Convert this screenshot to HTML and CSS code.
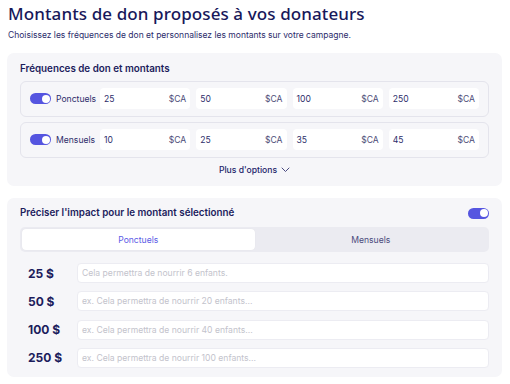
FILE: index.html
```html
<!DOCTYPE html>
<html lang="fr">
<head>
<meta charset="utf-8">
<link rel="stylesheet" href="styles.css">
</head>
<body>
<div class="page">
  <h1 class="title">Montants de don proposés à vos donateurs</h1>
  <p class="subtitle">Choisissez les fréquences de don et personnalisez les montants sur votre campagne.</p>

  <section class="card card-freq">
    <h2 class="card-title">Fréquences de don et montants</h2>
    <div class="freq-row">
      <span class="toggle"><span class="knob"></span></span>
      <span class="freq-label">Ponctuels</span>
      <div class="amounts">
        <div class="amount"><span>25</span><span class="cur">$CA</span></div>
        <div class="amount"><span>50</span><span class="cur">$CA</span></div>
        <div class="amount"><span>100</span><span class="cur">$CA</span></div>
        <div class="amount"><span>250</span><span class="cur">$CA</span></div>
      </div>
    </div>
    <div class="freq-row">
      <span class="toggle"><span class="knob"></span></span>
      <span class="freq-label">Mensuels</span>
      <div class="amounts">
        <div class="amount"><span>10</span><span class="cur">$CA</span></div>
        <div class="amount"><span>25</span><span class="cur">$CA</span></div>
        <div class="amount"><span>35</span><span class="cur">$CA</span></div>
        <div class="amount"><span>45</span><span class="cur">$CA</span></div>
      </div>
    </div>
    <div class="more">Plus d'options
      <svg class="chev" width="9" height="6" viewBox="0 0 9 6"><path d="M1 1 L4.5 4.5 L8 1" fill="none" stroke="currentColor" stroke-width="1" stroke-linecap="round" stroke-linejoin="round"/></svg>
    </div>
  </section>

  <section class="card card-impact">
    <div class="impact-head">
      <h2 class="card-title">Préciser l'impact pour le montant sélectionné</h2>
      <span class="toggle"><span class="knob"></span></span>
    </div>
    <div class="tabs">
      <div class="tab active">Ponctuels</div>
      <div class="tab">Mensuels</div>
    </div>
    <div class="impact-rows">
      <div class="impact-row"><span class="impact-amt">25 $</span><div class="impact-input">Cela permettra de nourrir 6 enfants.</div></div>
      <div class="impact-row"><span class="impact-amt">50 $</span><div class="impact-input">ex. Cela permettra de nourrir 20 enfants...</div></div>
      <div class="impact-row"><span class="impact-amt">100 $</span><div class="impact-input">ex. Cela permettra de nourrir 40 enfants...</div></div>
      <div class="impact-row"><span class="impact-amt">250 $</span><div class="impact-input">ex. Cela permettra de nourrir 100 enfants...</div></div>
    </div>
  </section>
</div>
</body>
</html>
```

FILE: styles.css
```css
* { box-sizing: border-box; }
html, body { margin: 0; padding: 0; background: #ffffff; }
body { font-family: Inter, "Liberation Sans", sans-serif; color: #1c1c5c; }

.page { padding: 3px 8px 0 7px; }

.title {
  margin: 0 0 0 1px;
  font-family: "Noto Sans", "Open Sans", sans-serif;
  font-weight: 500;
  font-size: 17px;
  line-height: 22px;
  color: #18185a;
  letter-spacing: 0.1px;
}

.subtitle {
  margin: 4px 0 0 1px;
  font-size: 8.5px;
  line-height: 13px;
  color: #2b2b6b;
}

.card {
  background: #f6f6f9;
  border-radius: 7px;
  padding: 0 13px;
}

.card-freq {
  margin-top: 11px;
  padding-top: 9px;
  padding-bottom: 9px;
}

.card-title {
  margin: 0;
  font-size: 9.8px;
  font-weight: 600;
  line-height: 14px;
  color: #1c1c5c;
}

.card-freq .card-title { margin-bottom: 5px; }

.freq-row {
  display: flex;
  align-items: center;
  border: 1px solid #e4e4ec;
  border-radius: 6px;
  padding: 6px 9px 7px 9px;
  margin-bottom: 5px;
}

.toggle {
  position: relative;
  display: inline-block;
  width: 21px;
  height: 11px;
  border-radius: 6px;
  background: #5555e0;
  flex: none;
}
.toggle .knob {
  position: absolute;
  right: 1.5px;
  top: 1.5px;
  width: 8px;
  height: 8px;
  border-radius: 50%;
  background: #ffffff;
}

.freq-label {
  width: 44px;
  margin-left: 5px;
  font-size: 8.6px;
  color: #2d2d6a;
}

.amounts {
  flex: 1;
  display: grid;
  grid-template-columns: repeat(4, 1fr);
  gap: 6px;
}

.amount {
  height: 21px;
  background: #ffffff;
  border-radius: 4px;
  display: flex;
  align-items: center;
  justify-content: space-between;
  padding: 0 4px 0 4px;
  font-size: 8.6px;
  color: #2d2d6a;
}
.amount .cur { color: #4d4d78; }

.more {
  display: flex;
  justify-content: center;
  align-items: center;
  gap: 4px;
  margin-top: 1px;
  font-size: 8.6px;
  font-weight: 500;
  line-height: 14px;
  color: #23236a;
}
.chev { color: #4a4a80; }

.card-impact {
  margin-top: 12px;
  padding-top: 8px;
  padding-bottom: 9px;
}

.impact-head {
  display: flex;
  justify-content: space-between;
  align-items: center;
  height: 14px;
}

.tabs {
  margin-top: 7px;
  display: grid;
  grid-template-columns: 1fr 1fr;
  background: #ebebf1;
  border-radius: 5px;
  padding: 2px;
  height: 25px;
}
.tab {
  display: flex;
  align-items: center;
  justify-content: center;
  font-size: 8.6px;
  color: #4a4a7c;
  border-radius: 4px;
}
.tab.active {
  background: #ffffff;
  color: #5b5be6;
  box-shadow: 0 0 1px rgba(0,0,0,0.08);
}

.impact-rows {
  margin-top: 11px;
  display: flex;
  flex-direction: column;
  gap: 8.3px;
}
.impact-row {
  display: flex;
  align-items: center;
}
.impact-amt {
  width: 57px;
  padding-left: 8px;
  font-size: 12px;
  font-weight: 700;
  color: #1c1c5c;
}
.impact-input {
  flex: 1;
  height: 20px;
  background: #ffffff;
  border: 1px solid #ececf2;
  border-radius: 4px;
  display: flex;
  align-items: center;
  padding-left: 4px;
  font-size: 8.6px;
  color: #c3c3cc;
}
```
